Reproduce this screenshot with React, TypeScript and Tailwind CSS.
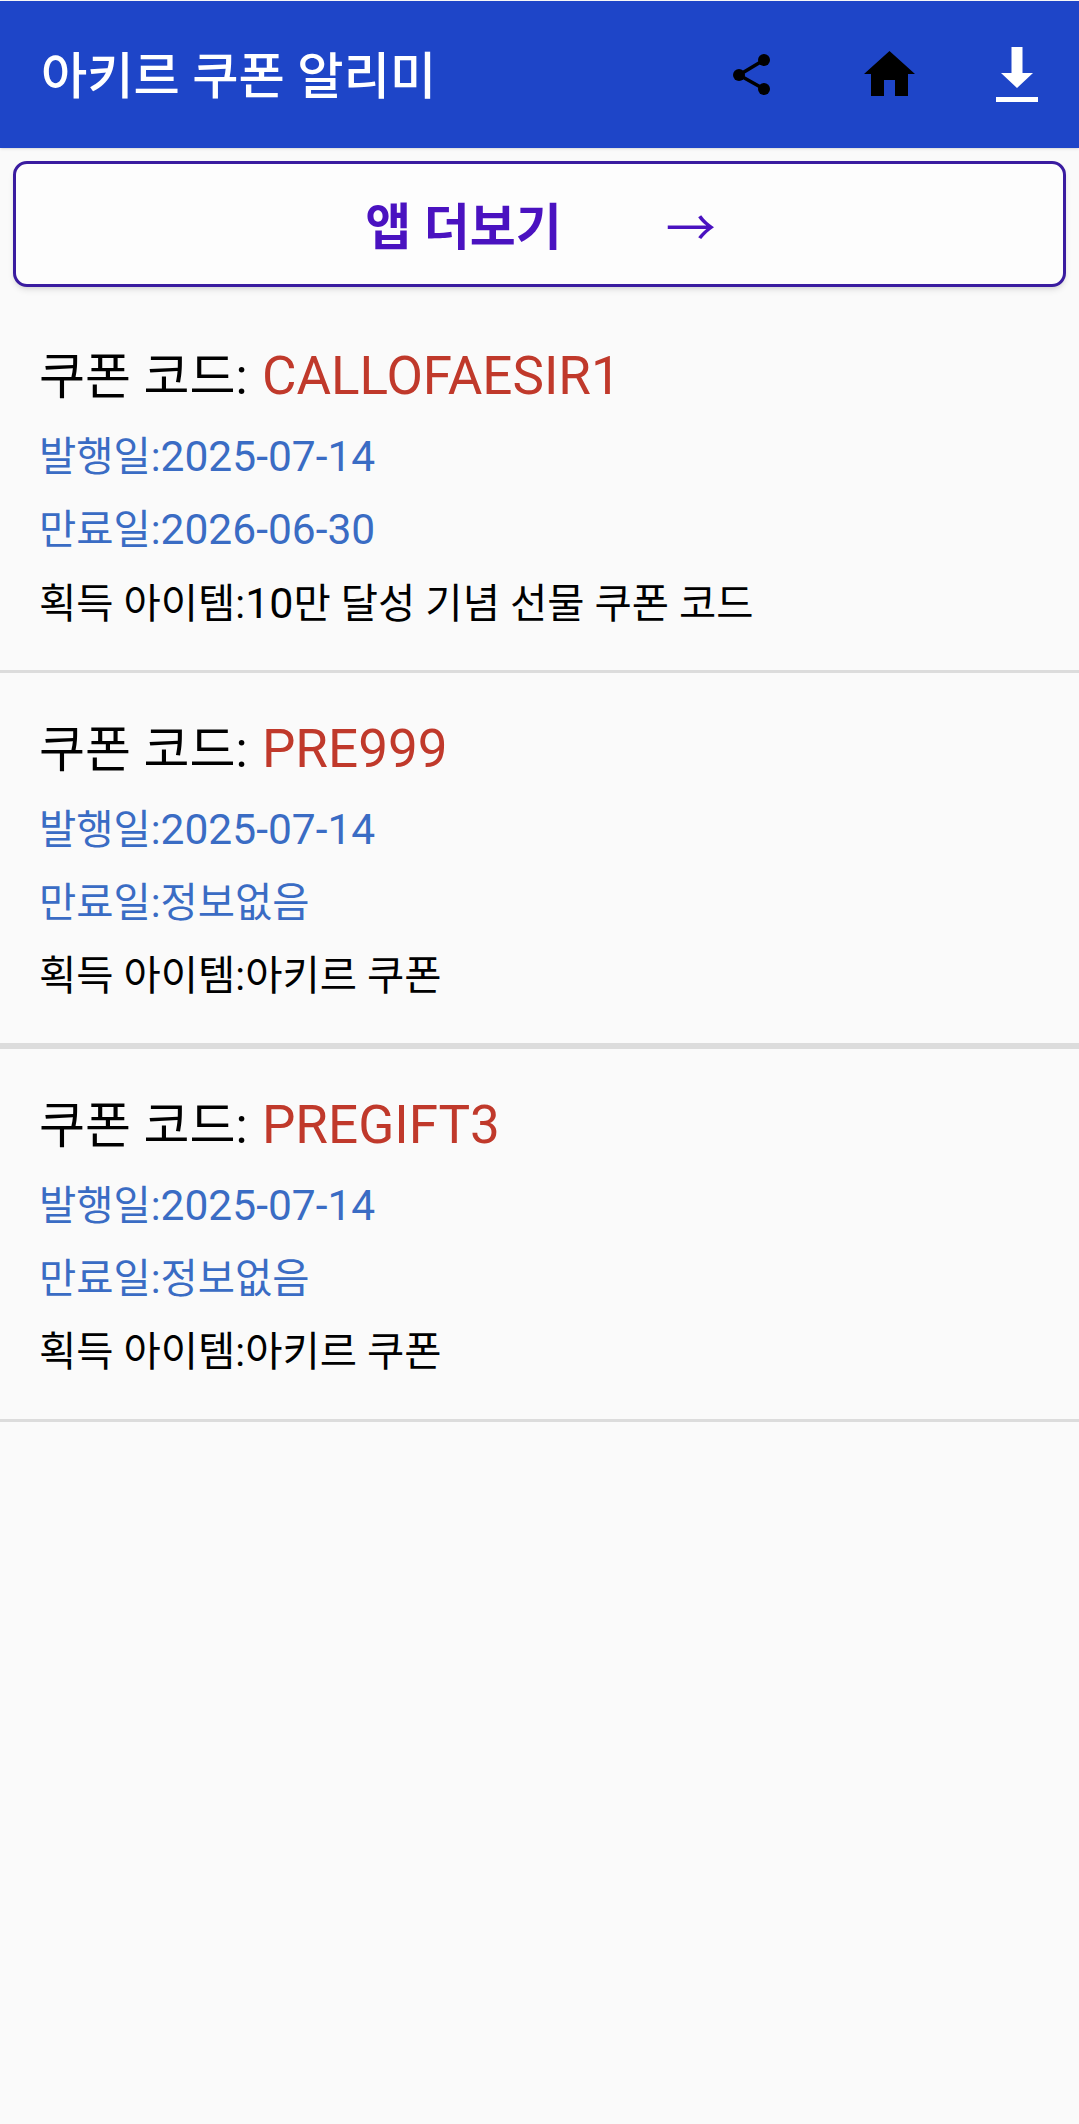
import React from 'react';

const FONT = "font-['Roboto','Noto_Sans_CJK_KR',sans-serif]";

interface Coupon {
  code: string;
  issued: string;
  expires: string;
  itemNumber?: string;
  item: string;
  divider: string;
}

const coupons: Coupon[] = [
  { code: 'CALLOFAESIR1', issued: '2025-07-14', expires: '2026-06-30', itemNumber: '10', item: '만 달성 기념 선물 쿠폰 코드', divider: 'h-[3px]' },
  { code: 'PRE999', issued: '2025-07-14', expires: '정보없음', item: '아키르 쿠폰', divider: 'h-[6px]' },
  { code: 'PREGIFT3', issued: '2025-07-14', expires: '정보없음', item: '아키르 쿠폰', divider: 'h-[3px]' },
];

const ShareIcon = () => (
  <svg className="w-[38px] h-[42px]" viewBox="0 0 38 42" fill="#000">
    <circle cx="31" cy="6" r="6" />
    <circle cx="6" cy="21" r="6" />
    <circle cx="31" cy="35" r="6" />
    <path d="M31 6 6 21l25 14" fill="none" stroke="#000" strokeWidth="3.5" />
  </svg>
);

const HomeIcon = () => (
  <svg className="w-[51px] h-[45px]" viewBox="0 0 51 45" fill="#000">
    <path d="M25.5 0 51 23h-7v22H31V29H20v16H7V23H0z" />
  </svg>
);

const DownloadIcon = () => (
  <svg className="w-[42px] h-[55px]" viewBox="0 0 42 55" fill="#fff">
    <path d="M15.5 0h11v26H37L21 41 5 26h10.500z" />
    <path d="M0 50h42v5H0z" />
  </svg>
);

// 한글과 숫자의 폭이 원본과 달라서 값 부분만 글자 크기를 따로 준다
const isDate = (value: string) => /^[0-9-]+$/.test(value);

const DateValue: React.FC<{ value: string }> = ({ value }) =>
  isDate(value) ? <span className="text-[42.5px]">{value}</span> : <span>{value}</span>;

const CouponRow: React.FC<{ coupon: Coupon }> = ({ coupon }) => (
  <div>
    <div className="pl-[39px] pt-[44px] h-[370px]">
      <p className="text-[50px] leading-[64px] text-black">
        쿠폰 코드: <span className="ml-[2px] text-[53px] text-[#c0392b]">{coupon.code}</span>
      </p>
      <p className="mt-[20px] text-[40.5px] leading-[56px] text-[#3a6cc4]">
        발행일:<DateValue value={coupon.issued} />
      </p>
      <p className="mt-[17px] text-[40.5px] leading-[56px] text-[#3a6cc4]">
        만료일:<DateValue value={coupon.expires} />
      </p>
      <p className="mt-[17px] text-[40.5px] leading-[56px] text-black">
        획득 아이템:
        {coupon.itemNumber && <span className="text-[43px]">{coupon.itemNumber}</span>}
        {coupon.item}
      </p>
    </div>
    <div className={`bg-[#dcdcdc] ${coupon.divider}`} />
  </div>
);

export default function App() {
  return (
    <div className={`${FONT} w-[1079px] h-[2124px] bg-[#fafafa] overflow-hidden`}>
      <header className="h-[147px] mt-[1px] bg-[#1e45c8] flex items-center pl-[41px] pr-[41px] shadow-sm">
        <h1 className="text-[50.3px] font-medium text-white flex-1 mt-[5px]">아키르 쿠폰 알리미</h1>
        <ShareIcon />
        <div className="ml-[93px] -mt-[3px]"><HomeIcon /></div>
        <div className="ml-[81px] -mt-[1px]"><DownloadIcon /></div>
      </header>
      <div className="mt-[13px] mx-[13px] h-[126px] bg-[#fdfdfd] border-[3px] border-[#3a1ca0] rounded-[14px] shadow-md flex items-center justify-center gap-[104px]">
        <span className="text-[50px] font-bold text-[#4a12c0] mt-[9px] ml-[2px]">앱 더보기</span>
        <span className="text-[50px] leading-none text-[#4a12c0] mt-[10px]">→</span>
      </div>
      <div className="mt-[13px]">
        {coupons.map((coupon) => (
          <CouponRow key={coupon.code} coupon={coupon} />
        ))}
      </div>
    </div>
  );
}
